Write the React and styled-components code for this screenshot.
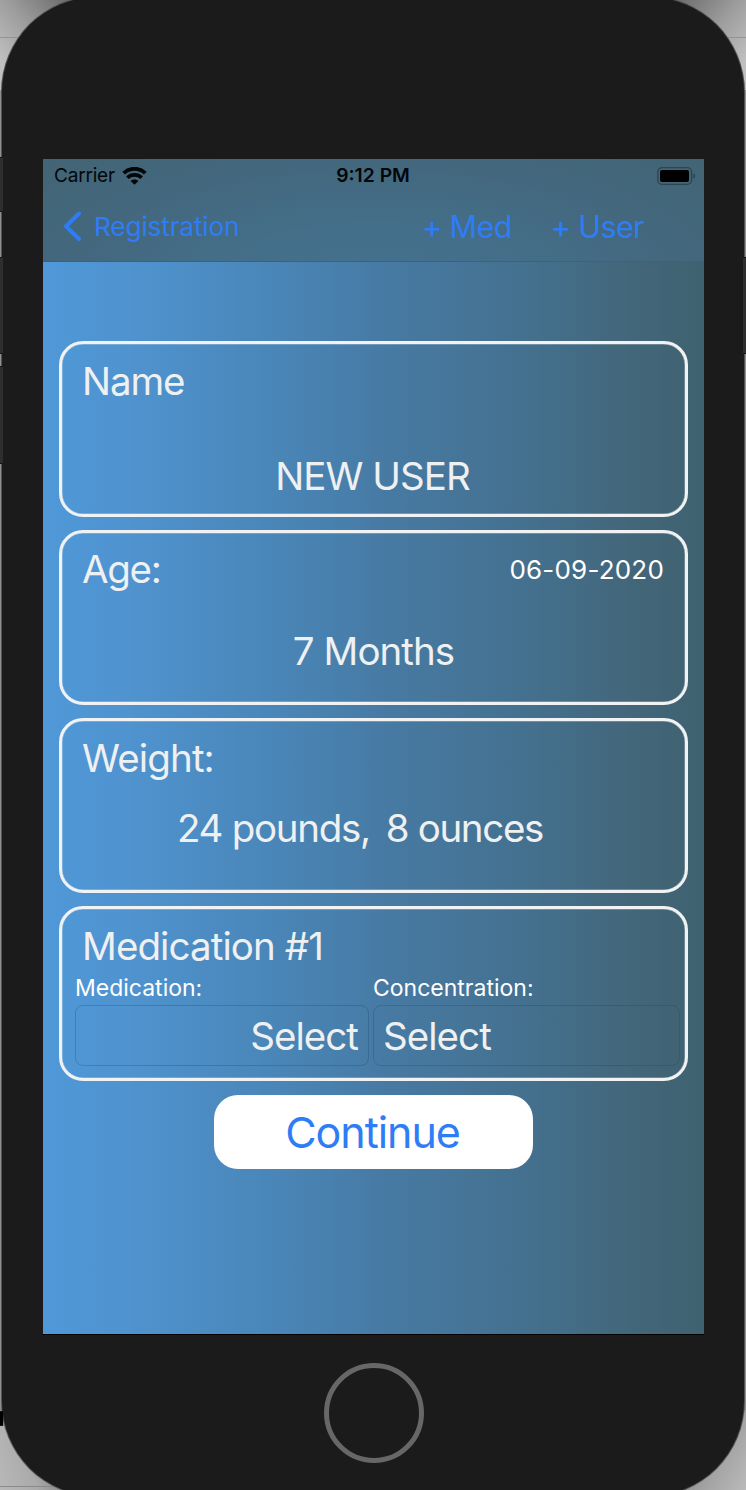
import React from "react";
import styled, { createGlobalStyle } from "styled-components";

const GlobalStyle = createGlobalStyle`
  * { box-sizing: border-box; }
  body { margin: 0; background: #b4b4b4; }
`;

const Desktop = styled.div`
  position: relative;
  width: 746px;
  height: 1490px;
  overflow: hidden;
  padding: 0 2px;
  font-family: Inter, "Liberation Sans", sans-serif;
  background:
    linear-gradient(#939393, #939393) 0 37px / 100% 1px no-repeat,
    linear-gradient(#8a8a8a, #8a8a8a) 0 1486px / 60px 1px no-repeat,
    linear-gradient(50deg, #c0c0c0 15%, #9c9c9c 50%, #686868 90%) 0 0 / 90px 90px no-repeat,
    linear-gradient(310deg, #c0c0c0 15%, #9c9c9c 50%, #686868 90%) 656px 0 / 90px 90px no-repeat,
    linear-gradient(75deg, #b8b8b8 0%, #aaaaaa 35%, #777777 75%) 0 1426px / 90px 64px no-repeat,
    linear-gradient(300deg, #bababa 0%, #a4a4a4 30%, #777777 75%) 656px 1410px / 90px 80px no-repeat,
    #909090;
`;

const SideButton = styled.div`
  position: absolute;
  ${(p) => p.$side}: 0;
  top: ${(p) => p.$top}px;
  width: 3px;
  height: ${(p) => p.$height}px;
  background: ${(p) => p.$color || "#2e2e2e"};
  border: solid #151515;
  border-width: 1px 0;
`;

const Phone = styled.div`
  height: 1499px;
  margin-top: -3px;
  padding: 162px 40px 0 41px;
  border-radius: 95px;
  background: #1b1b1b;
  box-shadow: 0 0 0 1px #555;
  display: flex;
  flex-direction: column;
  align-items: center;
`;

const Screen = styled.main`
  width: 661px;
  height: 1175px;
  flex: none;
  display: flex;
  flex-direction: column;
  background: linear-gradient(90deg, #5098d8 0%, #4f93cf 13%, #4882b1 41%, #477aa3 52%, #44708e 74%, #43677b 88%, #3f6270 100%);
  box-shadow: 0 1px #000;
`;

const Header = styled.header`
  height: 103px;
  border-bottom: 1px solid #3e6278;
  background: radial-gradient(ellipse 390px 155px at 50% 125%, #43728f 0%, #446e89 40%, #43677c 85%, #426371 130%);
`;

const StatusBar = styled.div`
  height: 33px;
  padding: 0 8px 1px 11px;
  display: grid;
  grid-template-columns: 1fr auto 1fr;
  align-items: center;
  color: #030608;
`;

const Carrier = styled.div`
  display: flex;
  align-items: center;
  gap: 7px;
`;

const BatterySlot = styled.div`
  display: flex;
  justify-content: flex-end;
`;

const Label = styled.span`
  display: block;
  white-space: nowrap;
  font-size: ${(p) => p.$size}px;
  line-height: ${(p) => p.$line || 48}px;
  letter-spacing: ${(p) => p.$track || 0}px;
  font-weight: ${(p) => p.$weight || 400};
`;

const Clock = styled(Label)`
  padding-right: 4px;
`;

const NavBar = styled.nav`
  height: 69px;
  padding: 0 60px 0 20px;
  display: flex;
  align-items: center;
  color: #2f7df6;
`;

const BackButton = styled.div`
  display: flex;
  align-items: center;
  gap: 11px;
`;

const Actions = styled.div`
  margin-left: auto;
  display: flex;
  gap: 39px;
`;

const Form = styled.div`
  padding: 79.4px 16px 0;
  display: flex;
  flex-direction: column;
  gap: 13.1px;
`;

const Card = styled.section`
  height: 175.2px;
  border: 3px solid #f1f2f3;
  border-radius: 24px;
  box-shadow: inset 0 0 0 0.5px rgba(241, 242, 243, 0.5);
  padding: 13px 13px 0;
  color: #eef0f1;
`;

const CardHead = styled.div`
  display: flex;
  align-items: center;
  justify-content: space-between;
  padding: 0 8px 0 7px;
`;

const DateText = styled(Label)`
  color: #fff;
`;

const Value = styled.div`
  margin-top: ${(p) => p.$top}px;
  padding-right: ${(p) => p.$shift || 0}px;
  display: flex;
  justify-content: center;
  gap: 16px;
`;

const Fields = styled.div`
  display: grid;
  grid-template-columns: 294px 307px;
  gap: 4px;
`;

const Field = styled.div`
  color: #fff;
`;

const SelectBox = styled.div`
  height: 61px;
  padding: 0 10px 0 9px;
  border: 1px solid rgba(25, 65, 95, 0.27);
  border-radius: 8px;
  display: flex;
  align-items: center;
  justify-content: ${(p) => p.$align};
  color: #eef0f1;
`;

const ContinueButton = styled.button`
  width: 319px;
  height: 74px;
  align-self: center;
  border: 0;
  border-radius: 24px;
  padding: 1px 8px 0 6px;
  background: #fff;
  color: #2f7df6;
  font-family: inherit;
`;

const HomeButton = styled.div`
  width: 100px;
  height: 100px;
  margin-top: 28.5px;
  border: 5px solid #676767;
  border-radius: 50%;
  flex: none;
`;

const WifiIcon = () => (
  <svg width="25" height="18" viewBox="0 0 25 18" fill="none" stroke="#030608">
    <path d="M1.7 6.1C7.9 0.4 17.1 0.4 23.3 6.1" strokeWidth="4" />
    <path d="M5.3 10.7C9.4 6.9 15.6 6.9 19.7 10.7" strokeWidth="3.7" />
    <path d="M8.6 13.9C10.8 11.9 14.2 11.9 16.4 13.9L12.5 17.8Z" fill="#030608" stroke="none" />
  </svg>
);

const BatteryIcon = () => (
  <svg width="39" height="18" viewBox="0 0 39 18">
    <rect x="0.8" y="0.7" width="33.8" height="16.6" rx="4.4" fill="none" stroke="#294653" strokeWidth="1.3" />
    <rect x="3" y="3" width="29" height="12" rx="2" fill="#000" />
    <path d="M36.4 6.2C38.6 7 38.6 11 36.4 11.8Z" fill="#294653" />
  </svg>
);

const BackIcon = () => (
  <svg width="20" height="32" viewBox="0 0 20 32" fill="none" stroke="#2f7df6" strokeWidth="4" strokeLinecap="round" strokeLinejoin="round">
    <path d="M16 2.5L3 15.3L16 28" />
  </svg>
);

export default function App() {
  return (
    <>
      <GlobalStyle />
      <Desktop>
        <SideButton $side="left" $top={157} $height={55} />
        <SideButton $side="left" $top={257} $height={97} />
        <SideButton $side="left" $top={366} $height={98} />
        <SideButton $side="left" $top={1411} $height={15} $color="#000" />
        <SideButton $side="right" $top={257} $height={97} />
        <Phone>
          <Screen>
            <Header>
              <StatusBar>
                <Carrier>
                  <Label $size={19} $line={33} $track={-0.2}>Carrier</Label>
                  <WifiIcon />
                </Carrier>
                <Clock $size={19.3} $line={33} $weight={600}>9:12 PM</Clock>
                <BatterySlot><BatteryIcon /></BatterySlot>
              </StatusBar>
              <NavBar>
                <BackButton>
                  <BackIcon />
                  <Label $size={26.3} $track={-0.2}>Registration</Label>
                </BackButton>
                <Actions>
                  <Label $size={30.5} $track={-0.6}>+ Med</Label>
                  <Label $size={30.5} $track={-0.6}>+ User</Label>
                </Actions>
              </NavBar>
            </Header>
            <Form>
              <Card>
                <CardHead><Label $size={38.5} $track={-1.1}>Name</Label></CardHead>
                <Value $top={47} $shift={2}><Label $size={38.5} $track={-0.95}>NEW USER</Label></Value>
              </Card>
              <Card>
                <CardHead>
                  <Label $size={38.5} $line={47} $track={-1.3}>Age:</Label>
                  <DateText $size={26} $track={0.2}>06-09-2020</DateText>
                </CardHead>
                <Value $top={33}><Label $size={38.5} $track={-0.95}>7 Months</Label></Value>
              </Card>
              <Card>
                <CardHead><Label $size={38.5} $track={-0.85}>Weight:</Label></CardHead>
                <Value $top={22} $shift={27}>
                  <Label $size={38.5} $track={-1.3}>24 pounds,</Label>
                  <Label $size={38.5} $track={-1.35}>8 ounces</Label>
                </Value>
              </Card>
              <Card>
                <CardHead><Label $size={38.5} $line={49} $track={-0.9}>Medication #1</Label></CardHead>
                <Fields>
                  <Field>
                    <Label $size={23} $line={34}>Medication:</Label>
                    <SelectBox $align="flex-end"><Label $size={38.5} $track={-0.95}>Select</Label></SelectBox>
                  </Field>
                  <Field>
                    <Label $size={23} $line={34}>Concentration:</Label>
                    <SelectBox $align="flex-start"><Label $size={38.5} $track={-0.95}>Select</Label></SelectBox>
                  </Field>
                </Fields>
              </Card>
              <ContinueButton><Label $size={43} $track={-1.05}>Continue</Label></ContinueButton>
            </Form>
          </Screen>
          <HomeButton />
        </Phone>
      </Desktop>
    </>
  );
}
